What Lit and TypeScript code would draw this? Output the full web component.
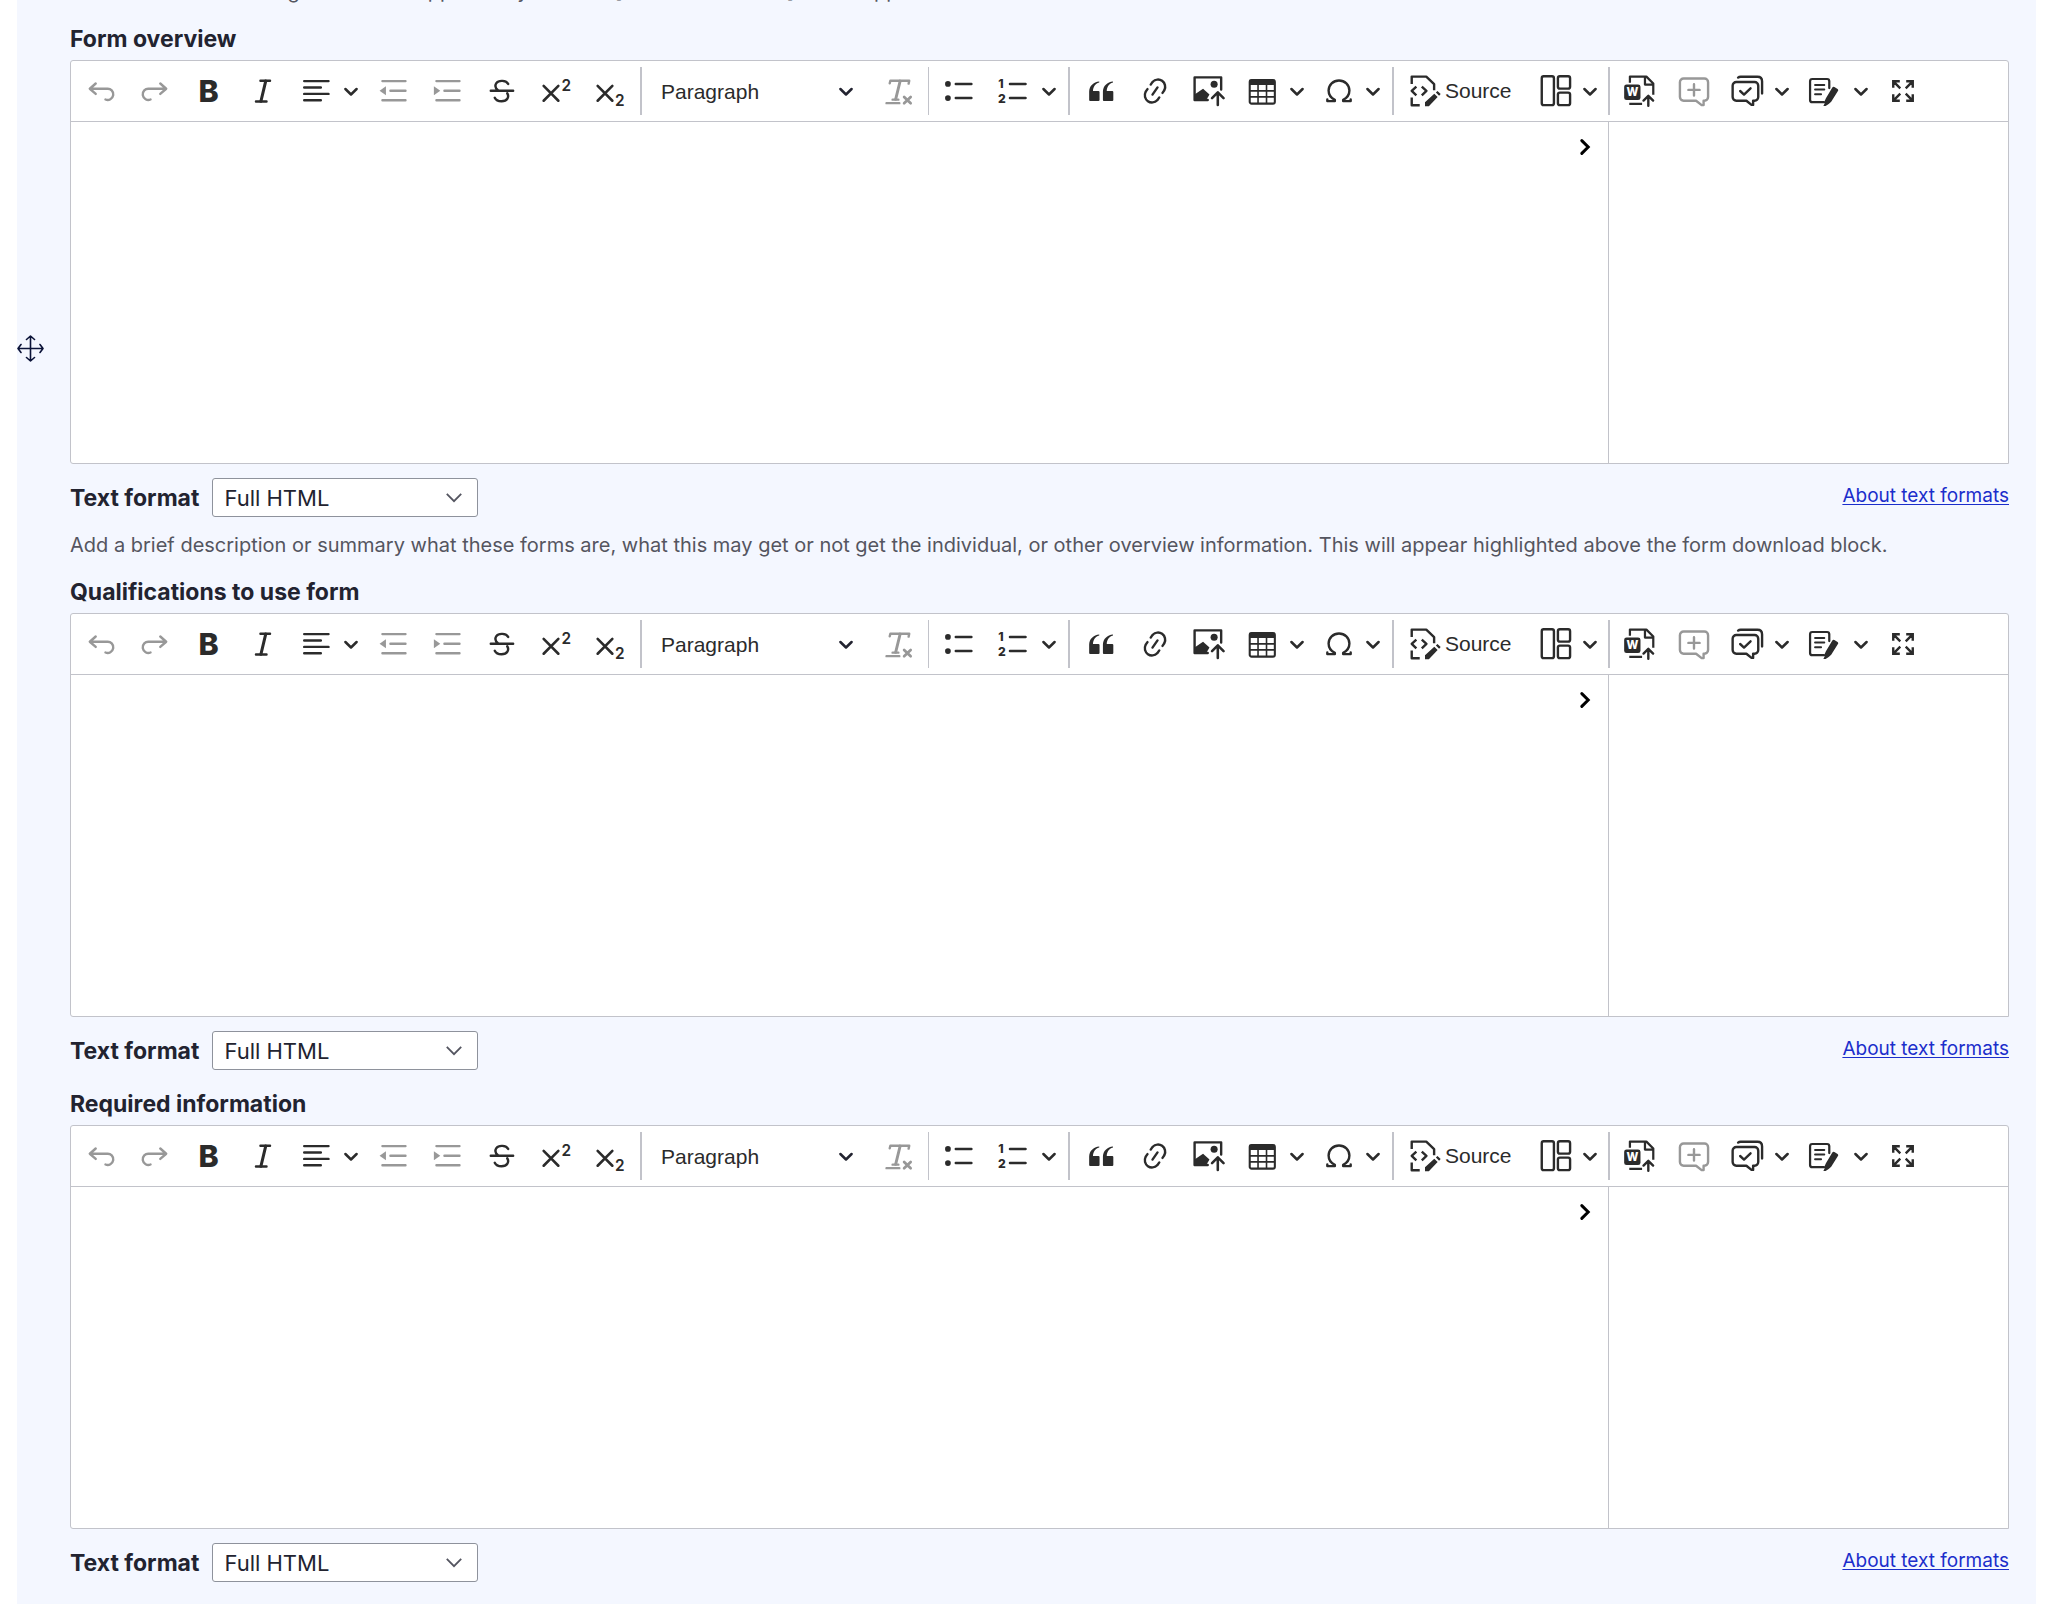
import { LitElement, html, css, svg, nothing, type SVGTemplateResult } from "lit";
import { customElement, property } from "lit/decorators.js";

const ICONS: Record<string, SVGTemplateResult> = {
  undo: svg`<path d="M6.7 5.3 3 8.6l3.7 3.2M3.2 8.6h10.6a3.5 3.5 0 1 1-1 6.7" />`,
  redo: svg`<path d="m13.3 5.3 3.7 3.3-3.7 3.2M16.8 8.6H6.2a3.5 3.5 0 1 0 1 6.7" />`,
  bold: svg`<text class="glyph heavy" x="3.4" y="17.1" font-size="19">B</text>`,
  italic: svg`<path d="M8.4 3.6h6M5.6 16.6h6.6" /><path stroke-width="1.9" d="M11.7 3.8 8.7 16.4" />`,
  align: svg`<path d="M2 3.8h15.2M2 7.8h10.4M2 11.8h15.2M2 15.8h10.4" />`,
  outdent: svg`<path d="M3.4 3.8h14.4M8.4 9.8h9.4M3.4 15.8h14.4" /><path class="fill" d="M5.6 7v5.6L1.6 9.8z" />`,
  indent: svg`<path d="M3.4 3.8h14.4M8.4 9.8h9.4M3.4 15.8h14.4" /><path class="fill" d="M1.8 7v5.6l4-2.8z" />`,
  strike: svg`<path d="M3.6 9.8h14M14.5 5.6c-1.2-2.4-6-2.6-7.4-.5-.9 1.4-.6 3.2 1 4.4M13.9 11.4c1.4 2.2.1 5-3.6 5-2.1 0-3.5-.7-4.2-2.2" />`,
  superscript: svg`<path stroke-width="1.6" d="m2.9 6.8 9.2 9.3M12.1 6.8l-9.2 9.3" /><text class="glyph" x="14" y="9.7" font-size="9.6">2</text>`,
  subscript: svg`<path stroke-width="1.6" d="m2.9 6.8 9.2 9.3M12.1 6.8l-9.2 9.3" /><text class="glyph" x="13.8" y="19.2" font-size="9.6">2</text>`,
  removeFormat: svg`<path d="M4.2 5.2 4.6 3.6h11.8L16 5.4M6 15.4h3.6M2.2 17.6h8" /><path stroke-width="1.8" d="M10.7 3.8 7.9 15.2" /><path stroke-width="1.7" d="m13.2 13.7 4.1 4M17.3 13.7l-4.1 4" />`,
  bulleted: svg`<path d="M8.6 5.6h9.8M8.6 14.4h9.8" /><circle class="fill" cx="3.7" cy="5.6" r="1.8" /><circle class="fill" cx="3.7" cy="14.4" r="1.8" />`,
  numbered: svg`<path d="M8.7 5.6h9.8M8.7 14.4h9.8" /><text class="glyph heavy" x="1.4" y="8.2" font-size="7.6">1</text><text class="glyph heavy" x="1.2" y="17.8" font-size="7.6">2</text>`,
  quote: svg`<path class="fill" d="M2.6 10.4C2.600 6.900 5.300 4.200 8.900 4v.7C6.200 5.400 5.100 7.700 5 10h3.400q.7 0 .7.7v4.900q0 .6-.7.6H3.200q-.6 0-.6-.6zM11.200 10.400c0-3.500 2.700-6.200 6.300-6.400v.7c-2.700.7-3.800 3-3.900 5.300H17q.7 0 .7.7v4.900q0 .6-.7.6h-5.200q-.6 0-.6-.6z" />`,
  link: svg`<path class="fill" d="m11.077 15 .991-1.416a.75.75 0 1 1 1.229.86l-1.148 1.64a.748.748 0 0 1-.217.206 5.251 5.251 0 0 1-8.503-5.955.741.741 0 0 1 .12-.274l1.147-1.639a.75.75 0 1 1 1.228.86L4.933 10.7l.006.003a3.75 3.75 0 0 0 6.132 4.294l.006.004zm5.494-5.335a.748.748 0 0 1-.12.274l-1.147 1.639a.75.75 0 1 1-1.228-.86l.86-1.23a3.75 3.75 0 0 0-6.144-4.301l-.86 1.229a.75.75 0 0 1-1.229-.86l1.148-1.64a.748.748 0 0 1 .217-.206 5.251 5.251 0 0 1 8.503 5.955zm-4.563-2.532a.75.75 0 0 1 .184 1.045l-3.155 4.505a.75.75 0 1 1-1.229-.86l3.155-4.506a.75.75 0 0 1 1.045-.184z" />`,
  image: svg`<path d="M9.2 15.6H1V1.5h16.6v7.6" /><path class="fill" d="M.7 16v-3.600L6.300 8.600l4 3.600L8.100 16z" /><circle class="fill" cx="13.2" cy="5.8" r="2.2" /><path stroke-width="1.6" d="M15.500 18.800v-7.600M11.900 14.500l3.600-3.700 3.600 3.700" />`,
  table: svg`<rect x="1.700" y="3.2" width="15.7" height="14.7" rx="1.2" stroke-width="1.3" /><path class="fill" d="M1.500 3h16v3.300h-16z" /><path stroke-width="1" stroke-linecap="butt" d="M6.900 6v12M12.200 6v12M1.500 9.900h16M1.500 13.700h16" />`,
  omega: svg`<path stroke-width="1.5" d="M2.700 15.300v1h4.700v-.8C4.900 14.300 3.500 12.200 3.500 9.700a6.500 6.300 0 1 1 13 0c0 2.500-1.400 4.600-3.900 5.800v.8h4.700v-1" />`,
  source: svg`<path stroke-width="1.5" stroke-linecap="butt" d="M1.700 5.600V1h9.100l4.900 4.700v3.900M1.700 14v4.900h5M4.600 7.200 1.700 9.900l2.900 2.800M8 7.200l2.900 2.700L8 12.700" /><path class="fill" d="M10 19.600v-2.500l5.800-5.400 2.100 2-5.500 5.900zM16.800 11l1-1 2 1.900-1 1z" />`,
  layout: svg`<rect x="1.1" y=".8" width="7.6" height="18" rx="1.2" stroke-width="1.5" /><rect x="11.2" y=".8" width="7.6" height="7.7" rx="1.2" stroke-width="1.5" /><rect x="11.2" y="11" width="7.6" height="7.8" rx="1.2" stroke-width="1.5" />`,
  word: svg`<path stroke-width="1.4" stroke-linecap="butt" d="M3.700 4.800V1H14l4.300 4.300v7M13.100 1v5h5.200M3.300 18h8" /><rect class="fill" x=".1" y="5.900" width="10.2" height="9.8" rx="1.5" /><text class="glyph knockout" x="1.500" y="13.2" font-size="7">W</text><path stroke-width="1.5" d="M15.200 19.200v-6M12.200 16l3-3 3 3" />`,
  comment: svg`<path stroke-width="1.5" d="M3.500 2.200h13a2.300 2.300 0 0 1 2.300 2.300v9.300a2.300 2.300 0 0 1-2.300 2.300H16v2.700h-1.200l-3.500-2.700H3.500a2.300 2.300 0 0 1-2.300-2.300V4.500a2.300 2.300 0 0 1 2.300-2.300zM10 5.800v7M6.500 9.300h7" />`,
  resolved: svg`<path stroke-width="1.5" d="M2.700 4.400h11.400a2.300 2.300 0 0 1 2.300 2.300v7.100a2.300 2.300 0 0 1-2.300 2.300h-.9v2.600h-1L9 16.100H2.700a2.300 2.300 0 0 1-2.300-2.300V6.700a2.300 2.300 0 0 1 2.300-2.300zM3.800 1.600q.6-.5 1.600-.5h10.500q2.900 0 2.900 2.900v7.500" /><path stroke-width="1.5" d="m5.100 10 2.400 2.200L11.600 8.300" />`,
  track: svg`<path stroke-width="1.4" d="M10 17H2.700q-1.400 0-1.400-1.400V3.900q0-1.400 1.400-1.400h9.200q1.400 0 1.400 1.400v4.300" /><path stroke-width="1.2" d="M4.400 6.300h5.800M4.400 9.100h5.800M4.400 12h3.800" /><path class="fill" d="M15.200 7.800q.6-.8 1.300-.3l2 1.200q.7.500.3 1.200l-4.300 6.800q-1.400 1.500-3.500 2.700l-1.400-.1.700-1.300q-.1-2 .9-3.500z" />`,
  fullscreen: svg`<path stroke-width="1.5" stroke-linecap="butt" stroke-linejoin="miter" d="M3.900 8V3.900H8M4 4l4.300 4.300M12 3.900h4.100V8M16 4l-4.300 4.300M3.900 12v4.100H8M4 16l4.300-4.300M12 16.100h4.100V12M16 16l-4.300-4.300" />`,
};

const icon = (name: string) => svg`<svg class="icon" viewBox="0 0 20 20" aria-hidden="true">${ICONS[name]}</svg>`;
const chevron = svg`<svg class="chevron" viewBox="0 0 16 16" aria-hidden="true"><path d="m2.4 6 5.600 5.500L13.600 6" /></svg>`;

type Tool =
  | { kind: "button" | "menu" | "split"; icon: string; label: string; disabled?: boolean }
  | { kind: "source" }
  | { kind: "heading" }
  | { kind: "sep"; variant?: "thin" | "tight" };

const TOOLS: Tool[] = [
  { kind: "button", icon: "undo", label: "Undo", disabled: true },
  { kind: "button", icon: "redo", label: "Redo", disabled: true },
  { kind: "button", icon: "bold", label: "Bold" },
  { kind: "button", icon: "italic", label: "Italic" },
  { kind: "menu", icon: "align", label: "Text alignment" },
  { kind: "button", icon: "outdent", label: "Decrease indent", disabled: true },
  { kind: "button", icon: "indent", label: "Increase indent", disabled: true },
  { kind: "button", icon: "strike", label: "Strikethrough" },
  { kind: "button", icon: "superscript", label: "Superscript" },
  { kind: "button", icon: "subscript", label: "Subscript" },
  { kind: "sep" },
  { kind: "heading" },
  { kind: "button", icon: "removeFormat", label: "Remove format", disabled: true },
  { kind: "sep", variant: "thin" },
  { kind: "button", icon: "bulleted", label: "Bulleted list" },
  { kind: "split", icon: "numbered", label: "Numbered list" },
  { kind: "sep" },
  { kind: "button", icon: "quote", label: "Block quote" },
  { kind: "button", icon: "link", label: "Link" },
  { kind: "button", icon: "image", label: "Upload image" },
  { kind: "menu", icon: "table", label: "Insert table" },
  { kind: "menu", icon: "omega", label: "Special characters" },
  { kind: "sep" },
  { kind: "source" },
  { kind: "menu", icon: "layout", label: "Layout" },
  { kind: "sep", variant: "tight" },
  { kind: "button", icon: "word", label: "Import from Word" },
  { kind: "button", icon: "comment", label: "Comment", disabled: true },
  { kind: "menu", icon: "resolved", label: "Comments archive" },
  { kind: "split", icon: "track", label: "Track changes" },
  { kind: "button", icon: "fullscreen", label: "Fullscreen mode" },
];

@customElement("rich-editor")
class RichEditor extends LitElement {
  @property() label = "";
  @property() hint = "";

  static styles = css`
    :host {
      display: block;
      color: #222330;
      font-family: Inter, "Liberation Sans", sans-serif;
    }
    .label {
      display: block;
      margin-bottom: 7px;
      font-size: 23px;
      line-height: 28px;
      font-weight: 700;
    }
    .editor {
      border: 1px solid #c2c3ca;
      border-radius: 3px 3px 0 3px;
      background: #fff;
      overflow: hidden;
    }
    .toolbar {
      display: flex;
      align-items: center;
      gap: 4px;
      padding: 6px 5px;
      border-bottom: 1px solid #c2c3ca;
      font-family: "Liberation Sans", Arial, sans-serif;
    }
    button {
      display: flex;
      align-items: center;
      flex: none;
      height: 48px;
      margin: 0;
      padding: 0 9px;
      border: 0;
      background: none;
      color: #2b2b2b;
      font: inherit;
    }
    button:disabled {
      color: #989898;
    }
    .menu {
      gap: 10px;
      padding-right: 5px;
    }
    .split {
      display: flex;
    }
    .arrow {
      padding: 0 5px 0 4px;
    }
    .source {
      gap: 4px;
      padding-right: 15px;
      font-size: 21px;
    }
    .icon {
      display: block;
      width: 32px;
      height: 32px;
      overflow: visible;
      fill: none;
      stroke: currentColor;
      stroke-width: 1.5;
      stroke-linecap: round;
      stroke-linejoin: round;
    }
    .chevron {
      display: block;
      width: 16px;
      height: 16px;
      fill: none;
      stroke: currentColor;
      stroke-width: 2.5;
      stroke-linecap: round;
      stroke-linejoin: round;
    }
    .fill {
      fill: currentColor;
      stroke: none;
    }
    .glyph {
      fill: currentColor;
      stroke: none;
      font-family: Inter, sans-serif;
      font-weight: 600;
    }
    .heavy {
      font-weight: 800;
    }
    .knockout {
      fill: #fff;
      font-weight: 800;
    }
    .sep {
      width: 2px;
      height: 48px;
      margin: 0 2px;
      background: #c2c3ca;
    }
    .thin {
      width: 1px;
      margin: 0;
    }
    .tight {
      margin: 0 1px;
    }
    .pick {
      display: grid;
      align-items: center;
    }
    .pick > * {
      grid-area: 1 / 1;
    }
    .pick svg {
      justify-self: end;
      margin-right: 16px;
      pointer-events: none;
    }
    select {
      appearance: none;
      margin: 0;
      background: #fff;
      color: #222330;
      font: inherit;
    }
    .heading {
      width: 222px;
      height: 48px;
      padding: 0 13px;
      border: 0;
      color: #2b2b2b;
      font-size: 21px;
    }
    .format {
      width: 266px;
      height: 39px;
      padding: 0 11px;
      border: 1px solid #8e929c;
      border-radius: 3px;
      font-size: 22px;
    }
    .pick .caret {
      width: 16px;
      height: 16px;
      color: #545560;
      fill: none;
      stroke: currentColor;
      stroke-width: 1.8;
    }
    .body {
      display: grid;
      grid-template-columns: 1fr 399px;
      height: 341px;
    }
    .writing {
      display: flex;
      align-items: flex-start;
      padding-right: 7px;
      border-right: 1px solid #c2c3ca;
    }
    textarea {
      flex: 1;
      align-self: stretch;
      padding: 12px 16px;
      border: 0;
      outline: 0;
      resize: none;
      background: none;
      font: inherit;
      font-size: 20px;
    }
    .toggle {
      width: 32px;
      height: 32px;
      margin-top: 9px;
      padding: 0;
      justify-content: center;
      color: #000;
    }
    .toggle svg {
      width: 20px;
      height: 20px;
      fill: none;
      stroke: currentColor;
      stroke-width: 3;
      stroke-linecap: round;
    }
    .row {
      display: flex;
      align-items: center;
      gap: 13px;
      margin-top: 14px;
    }
    .row label {
      font-size: 23px;
      line-height: 28px;
      font-weight: 700;
    }
    .row a {
      align-self: flex-start;
      margin-left: auto;
      color: #1b2ecb;
      font-size: 19px;
      line-height: 36px;
      text-underline-offset: 2px;
    }
    .hint {
      margin: 15px 0 0;
      color: #545560;
      font-size: 20px;
      line-height: 26px;
    }
  `;

  private tool(t: Tool) {
    switch (t.kind) {
      case "sep":
        return html`<span class="sep ${t.variant ?? ""}"></span>`;
      case "heading":
        return html`<span class="pick">
          <select class="heading" aria-label="Heading"><option>Paragraph</option></select>${chevron}
        </span>`;
      case "source":
        return html`<button class="source" type="button">${icon("source")}<span>Source</span></button>`;
      case "menu":
        return html`<button class="menu" type="button" aria-label=${t.label}>${icon(t.icon)}${chevron}</button>`;
      case "split":
        return html`<span class="split">
          <button type="button" aria-label=${t.label}>${icon(t.icon)}</button>
          <button class="arrow" type="button" aria-label="${t.label} options">${chevron}</button>
        </span>`;
      default:
        return html`<button type="button" aria-label=${t.label} ?disabled=${t.disabled}>${icon(t.icon)}</button>`;
    }
  }

  render() {
    return html`
      <label class="label" for="text">${this.label}</label>
      <div class="editor">
        <div class="toolbar" role="toolbar">${TOOLS.map((t) => this.tool(t))}</div>
        <div class="body">
          <div class="writing">
            <textarea id="text"></textarea>
            <button class="toggle" type="button" aria-label="Toggle sidebar">
              <svg viewBox="0 0 20 20" aria-hidden="true"><path d="m6.8 3.6 6.4 6.4-6.4 6.4" /></svg>
            </button>
          </div>
          <aside></aside>
        </div>
      </div>
      <div class="row">
        <label for="format">Text format</label>
        <span class="pick">
          <select class="format" id="format"><option>Full HTML</option></select>
          <svg class="caret" viewBox="0 0 16 16" aria-hidden="true"><path d="m.8 3.8 7.200 7.400 7.200-7.400" /></svg>
        </span>
        <a href="#formats">About text formats</a>
      </div>
      ${this.hint ? html`<p class="hint">${this.hint}</p>` : nothing}
    `;
  }
}

const FIELDS = [
  {
    label: "Form overview",
    hint: "Add a brief description or summary what these forms are, what this may get or not get the individual, or other overview information. This will appear highlighted above the form download block.",
  },
  { label: "Qualifications to use form", hint: "" },
  { label: "Required information", hint: "" },
];

@customElement("app-root")
class AppRoot extends LitElement {
  static styles = css`
    :host {
      display: block;
      background: #fff;
      font-family: Inter, "Liberation Sans", sans-serif;
    }
    .page {
      min-height: 100vh;
      box-sizing: border-box;
      padding: 0 14px 0 17px;
      overflow: hidden;
    }
    .item {
      display: grid;
      grid-template-columns: 53px 1fr;
      min-height: 100vh;
      box-sizing: border-box;
      padding-right: 27px;
      background: #f4f7ff;
    }
    .handle {
      justify-self: start;
      align-self: start;
      margin: 335px 0 0;
      padding: 0;
      border: 0;
      background: none;
      color: #0b1338;
      cursor: move;
    }
    .handle svg {
      display: block;
      width: 27px;
      height: 27px;
      fill: none;
      stroke: currentColor;
      stroke-width: 1.6;
      stroke-linecap: round;
      stroke-linejoin: round;
    }
    .lead {
      margin: -22px 0 21px;
      color: #545560;
      font-size: 20px;
      line-height: 26px;
    }
    .fields {
      display: flex;
      flex-direction: column;
      gap: 20px;
    }
  `;

  render() {
    return html`
      <div class="page">
        <div class="item">
          <button class="handle" type="button" aria-label="Drag to re-order">
            <svg viewBox="0 0 27 27" aria-hidden="true">
              <path d="M13.500 1v25M1 13.500h25M9.500 4.500l4-3.500 4 3.500M9.500 22.500l4 3.500 4-3.500M4 9.500l-3 4 3 4M23 9.500l3 4-3 4" />
            </svg>
          </button>
          <div>
            <p class="lead">The field on the heading section will appear only with the [the form sections] that is appended</p>
            <div class="fields">
              ${FIELDS.map((f) => html`<rich-editor .label=${f.label} .hint=${f.hint}></rich-editor>`)}
            </div>
          </div>
        </div>
      </div>
    `;
  }
}
